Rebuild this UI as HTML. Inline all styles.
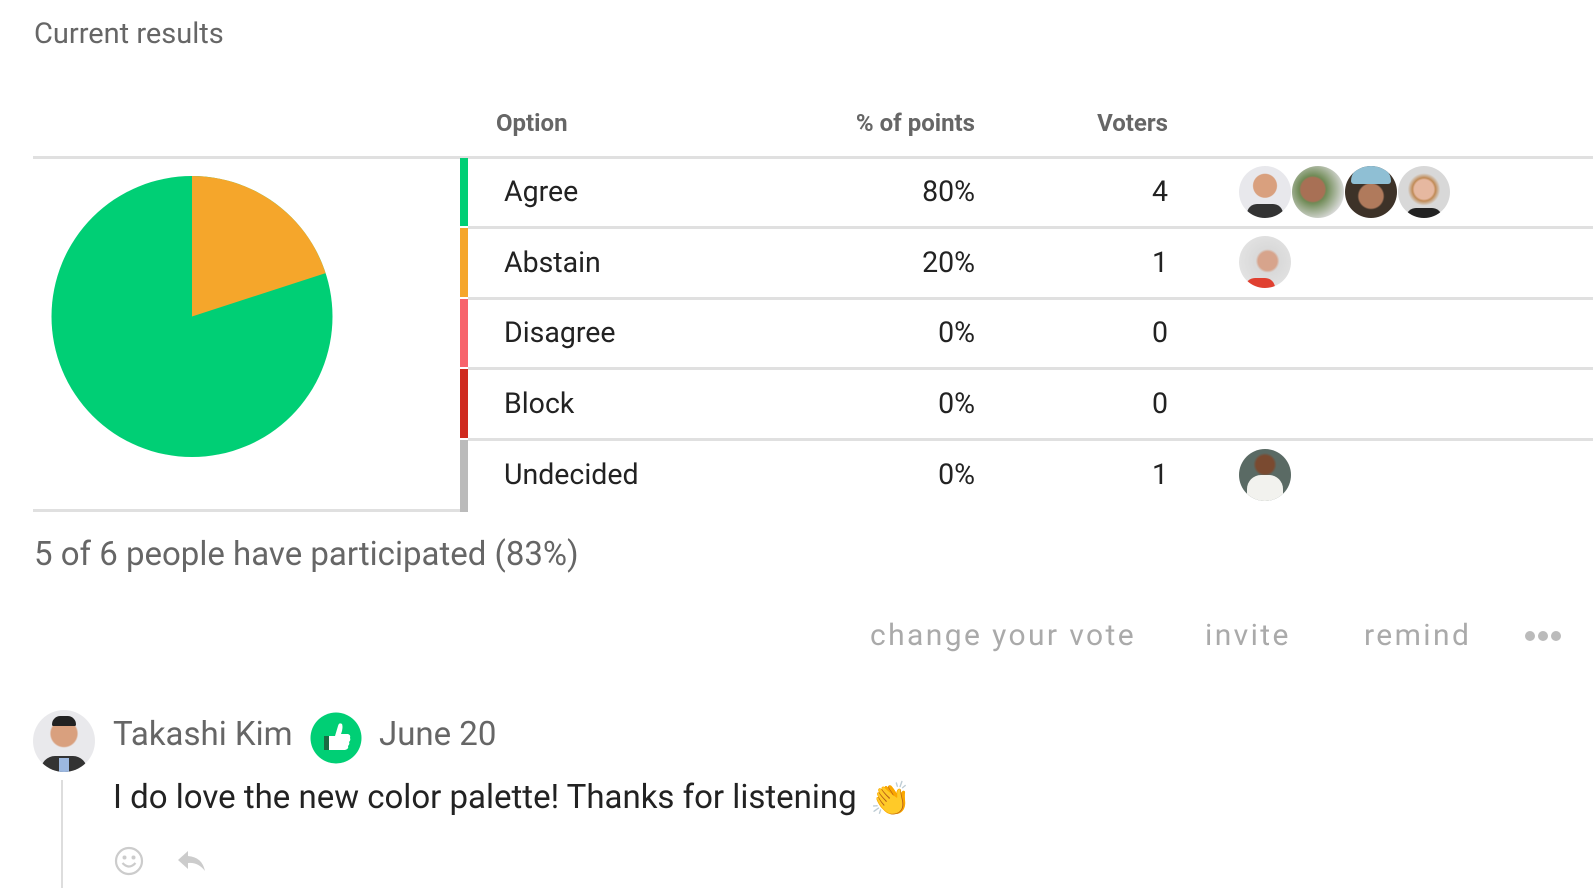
<!DOCTYPE html>
<html><head><meta charset="utf-8"><style>
body{margin:0;width:1594px;height:888px;background:#fff;position:relative;overflow:hidden;font-family:"Roboto","Liberation Sans",sans-serif}
.a{position:absolute;white-space:nowrap}
.hl{position:absolute;height:3px;background:#e0e0e0}
.hd{font-size:24px;font-weight:bold;color:#666;top:109px}
.op{font-size:28.5px;color:#222;left:504px}
.num{font-size:28.5px;color:#222;text-align:right}
.bar{position:absolute;left:460px;width:8px}
.av{position:absolute;width:52px;height:52px;border-radius:50%;overflow:hidden}
.act{font-size:30px;color:#aaa;letter-spacing:2.4px;top:618px}
</style></head><body>
<div class="a" style="left:34px;top:17px;font-size:29px;color:#666">Current results</div>

<div class="a hd" style="left:496px">Option</div>
<div class="a hd" style="right:619px">% of points</div>
<div class="a hd" style="right:426px">Voters</div>

<div class="hl" style="left:33px;width:1560px;top:156px"></div>
<div class="hl" style="left:468px;width:1125px;top:226px"></div>
<div class="hl" style="left:468px;width:1125px;top:297px"></div>
<div class="hl" style="left:468px;width:1125px;top:367px"></div>
<div class="hl" style="left:468px;width:1125px;top:438px"></div>
<div class="hl" style="left:33px;width:427px;top:509px"></div>

<div class="bar" style="top:158px;height:68px;background:#00cf75"></div>
<div class="bar" style="top:228px;height:69px;background:#f5a62b"></div>
<div class="bar" style="top:299px;height:68px;background:#f7646c"></div>
<div class="bar" style="top:369px;height:69px;background:#cf2a1f"></div>
<div class="bar" style="top:440px;height:72px;background:#bbb"></div>

<svg class="a" style="left:0;top:0" width="460" height="510">
<circle cx="192" cy="316.5" r="140.5" fill="#00cf75"/>
<path d="M192 316.5 L192 176 A140.5 140.5 0 0 1 325.6 273.1 Z" fill="#f5a62b"/>
</svg>

<div class="a op" style="top:175px">Agree</div>
<div class="a op" style="top:246px">Abstain</div>
<div class="a op" style="top:316px">Disagree</div>
<div class="a op" style="top:387px">Block</div>
<div class="a op" style="top:458px">Undecided</div>

<div class="a num" style="right:619px;top:175px">80%</div>
<div class="a num" style="right:619px;top:246px">20%</div>
<div class="a num" style="right:619px;top:316px">0%</div>
<div class="a num" style="right:619px;top:387px">0%</div>
<div class="a num" style="right:619px;top:458px">0%</div>
<div class="a num" style="right:426px;top:175px">4</div>
<div class="a num" style="right:426px;top:246px">1</div>
<div class="a num" style="right:426px;top:316px">0</div>
<div class="a num" style="right:426px;top:387px">0</div>
<div class="a num" style="right:426px;top:458px">1</div>

<div class="av" style="left:1239px;top:166px;background:radial-gradient(circle at 50% 38%,#d9a07e 0 28%,#e8e8ec 30%);"><div style="position:absolute;bottom:0;left:8px;width:36px;height:14px;background:#333;border-radius:10px 10px 0 0"></div></div>
<div class="av" style="left:1292px;top:166px;background:radial-gradient(circle at 40% 45%,#a87055 0 28%,#6f8a55 32%,#dcdcdc 75%);"></div>
<div class="av" style="left:1345px;top:166px;background:radial-gradient(circle at 50% 58%,#b07a5c 0 30%,#3d3228 34%);"><div style="position:absolute;top:0;left:6px;width:40px;height:18px;background:#8fbfd4;border-radius:20px 20px 4px 4px"></div></div>
<div class="av" style="left:1398px;top:166px;background:radial-gradient(circle at 50% 45%,#e6b8a0 0 25%,#c08a55 30%,#d8d8d8 42%);"><div style="position:absolute;bottom:0;left:8px;width:36px;height:10px;background:#222;border-radius:10px 10px 0 0"></div></div>
<div class="av" style="left:1239px;top:236px;background:radial-gradient(circle at 55% 48%,#d7a48c 0 24%,#d9d9d9 30%,#e8e8e8);"><div style="position:absolute;bottom:0;left:6px;width:30px;height:10px;background:#e04030;border-radius:10px 10px 0 0"></div></div>
<div class="av" style="left:1239px;top:449px;background:radial-gradient(circle at 50% 30%,#7a4a30 0 20%,#5a6a64 26%);"><div style="position:absolute;bottom:0;left:8px;width:36px;height:26px;background:#f2f2ee;border-radius:14px 14px 0 0"></div></div>

<div class="a" style="left:34px;top:535px;font-size:33px;color:#666">5 of 6 people have participated (83%)</div>

<div class="a act" style="left:870px">change your vote</div>
<div class="a act" style="left:1205px">invite</div>
<div class="a act" style="left:1364px">remind</div>
<svg class="a" style="left:1524px;top:630px" width="40" height="12"><circle cx="6" cy="6" r="5" fill="#bbb"/><circle cx="19" cy="6" r="5" fill="#bbb"/><circle cx="32" cy="6" r="5" fill="#bbb"/></svg>

<div class="av" style="left:33px;top:710px;width:62px;height:62px;background:radial-gradient(circle at 50% 38%,#d9a07e 0 26%,#e9e9ec 29%);"><div style="position:absolute;top:6px;left:19px;width:24px;height:10px;background:#222;border-radius:10px 10px 2px 2px"></div><div style="position:absolute;bottom:0;left:8px;width:46px;height:16px;background:#333;border-radius:14px 14px 0 0"></div><div style="position:absolute;bottom:0;left:26px;width:10px;height:14px;background:#9cb8e0"></div></div>
<div class="a" style="left:113px;top:715px;font-size:33px;color:#666">Takashi Kim</div>
<svg class="a" style="left:310px;top:712px" width="52" height="52" viewBox="0 0 52 52"><circle cx="26" cy="26" r="25.5" fill="#00cf75"/><rect x="14" y="24" width="5" height="14" fill="#1a6a42"/><path d="M19 24 L25 24 L28 14 Q29 10 32 12 Q33 14 32 19 L31 22 L38 22 Q41 23 40 26 Q41 28 39 30 Q40 32 38 34 Q39 37 35 38 L19 38 Z" fill="#fff"/></svg>
<div class="a" style="left:379px;top:715px;font-size:33px;color:#666">June 20</div>

<div class="a" style="left:61px;top:780px;width:2px;height:108px;background:#ddd"></div>
<div class="a" style="left:113px;top:778px;font-size:33px;color:#222">I do love the new color palette! Thanks for listening</div>
<div class="a" style="left:870px;top:780px;font-size:33px;color:#f4b63a">👏</div>
<svg class="a" style="left:114px;top:846px" width="30" height="30" viewBox="0 0 30 30"><circle cx="15" cy="15" r="13" fill="none" stroke="#ccc" stroke-width="2.2"/><circle cx="10.5" cy="11.5" r="2" fill="#ccc"/><circle cx="19.5" cy="11.5" r="2" fill="#ccc"/><path d="M8.5 17 Q15 24 21.5 17" fill="none" stroke="#ccc" stroke-width="2.2"/></svg>
<svg class="a" style="left:177px;top:849px" width="30" height="24" viewBox="0 0 30 24"><path d="M11 2 L1 11 L11 20 L11 14 Q21 13 28 22 Q25 8 11 7 Z" fill="#ccc"/></svg>
</body></html>
